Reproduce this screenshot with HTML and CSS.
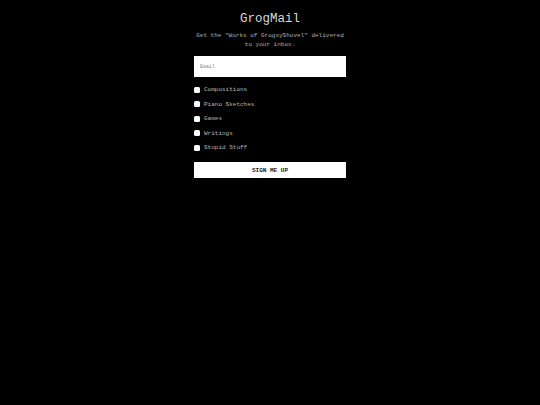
FILE: index.html
```
<!DOCTYPE html>
<html>
<head>
<meta charset="utf-8">
<link rel="stylesheet" href="styles.css">
</head>
<body>
<main class="wrap">
  <h1 class="title">GrogMail</h1>
  <p class="sub">Get the "Works of GrogsyShovel" delivered<br>to your inbox.</p>
  <form class="form">
    <input class="email" type="email" placeholder="Email">
    <div class="opts">
      <label class="opt"><span class="box"></span>Compositions</label>
      <label class="opt"><span class="box"></span>Piano Sketches</label>
      <label class="opt"><span class="box"></span>Games</label>
      <label class="opt"><span class="box"></span>Writings</label>
      <label class="opt"><span class="box"></span>Stupid Stuff</label>
    </div>
    <button class="btn" type="button">SIGN ME UP</button>
  </form>
</main>
</body>
</html>
```
FILE: styles.css
```
html, body {
  margin: 0;
  padding: 0;
  background: #000;
  height: 100%;
}
body {
  font-family: "Liberation Mono", "Courier New", monospace;
  color: #ddd;
}
.wrap {
  width: 152px;
  margin: 0 auto;
  padding-top: 12px;
  display: flex;
  flex-direction: column;
  align-items: stretch;
}
.title {
  margin: 0;
  font-weight: normal;
  font-size: 12.5px;
  line-height: 15px;
  text-align: center;
  color: #d8d8d8;
}
.sub {
  margin: 4px 0 0;
  font-size: 6px;
  line-height: 9px;
  text-align: center;
  color: #b0b0b0;
  white-space: nowrap;
}
.form {
  margin-top: 7px;
  display: flex;
  flex-direction: column;
}
.email {
  box-sizing: border-box;
  height: 21px;
  width: 100%;
  border: none;
  margin: 0;
  padding: 0 6px;
  background: #fff;
  font-family: inherit;
  font-size: 5px;
  outline: none;
}
.email::placeholder {
  color: #888;
}
.opts {
  margin-top: 8px;
  display: flex;
  flex-direction: column;
  gap: 5.5px;
}
.opt {
  display: flex;
  align-items: center;
  gap: 4px;
  font-size: 6px;
  line-height: 9px;
  color: #b8b8b8;
}
.box {
  width: 6px;
  height: 6px;
  background: #fff;
  border-radius: 1.5px;
  flex: none;
}
.btn {
  margin-top: 10px;
  height: 16px;
  width: 100%;
  border: none;
  background: #fff;
  color: #222;
  font-family: inherit;
  font-size: 6px;
  font-weight: bold;
  padding: 0;
}
```
